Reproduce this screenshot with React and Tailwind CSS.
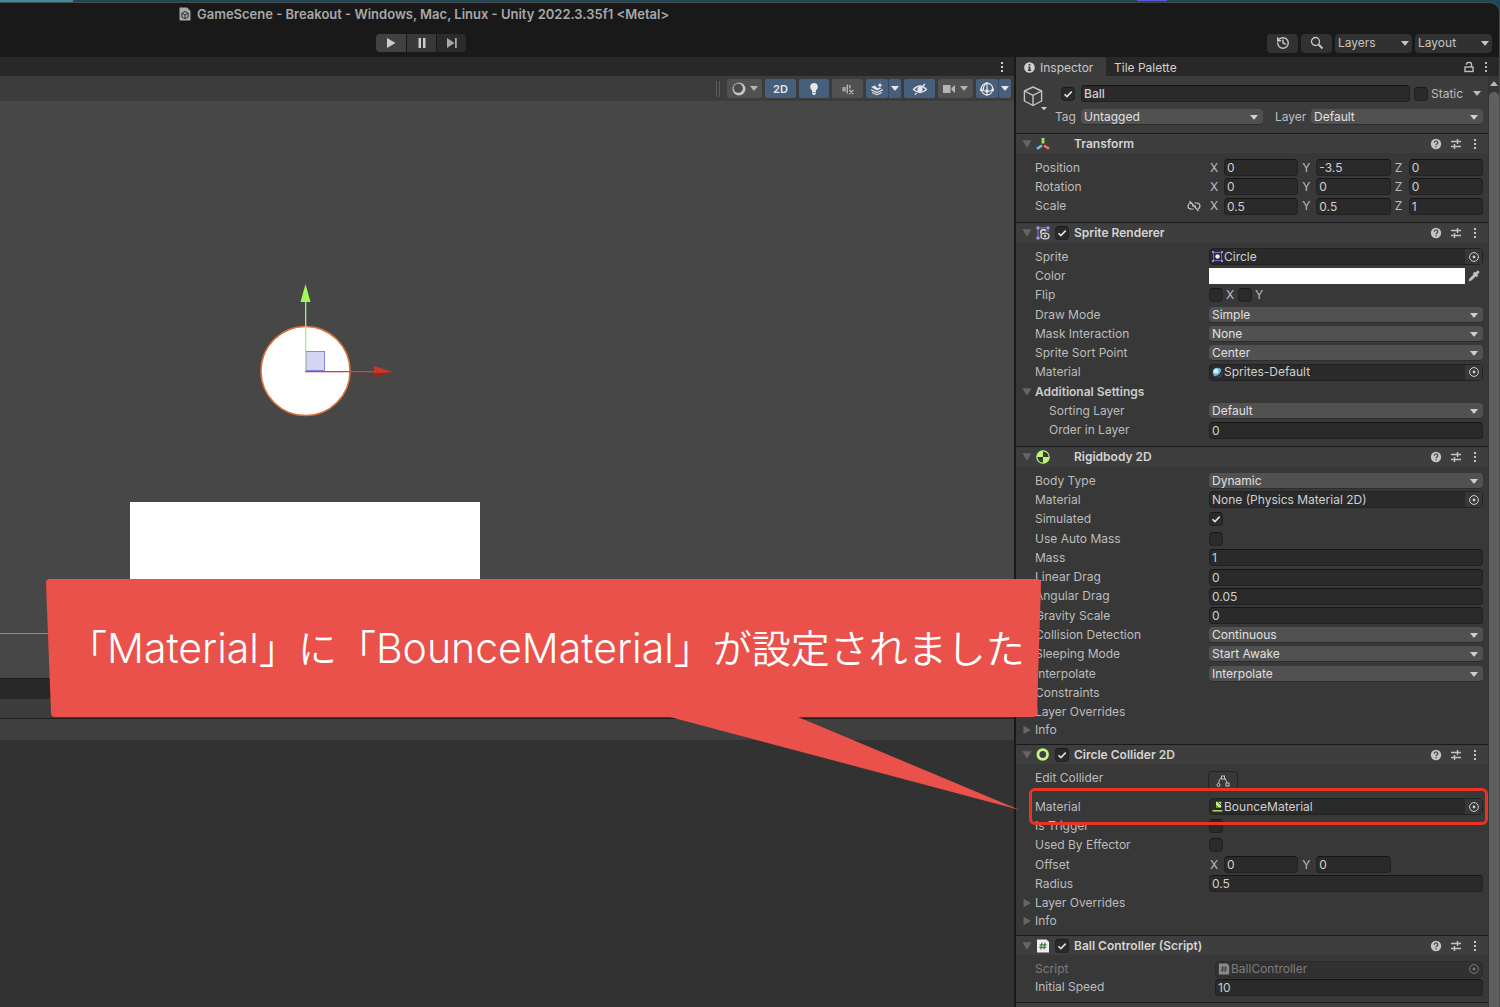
import { useId } from 'react'
import { History, Search, Pipette } from 'lucide-react'

/* ---------- small icons ---------- */

function Caret({ className = '' }) {
  return (
    <svg viewBox="0 0 8 5" className={`w-2 h-[5px] pointer-events-none ${className}`} fill="currentColor">
      <path d="M0 0h8L4.6 4.2q-.6.7-1.2 0z" />
    </svg>
  )
}

function Foldout({ open }) {
  return (
    <svg viewBox="0 0 10 10" className="w-2.5 h-2.5 text-[#666]" fill="currentColor">
      {open ? <path d="M.5 1.300h9L5 8.800z" /> : <path d="M1.500 .8l7.500 4.200-7.500 4.200z" />}
    </svg>
  )
}

function Kebab({ className = '' }) {
  return (
    <svg viewBox="0 0 4 12" className={`w-1 h-3 ${className}`} fill="currentColor">
      <rect x="1" y="1" width="2" height="2" />
      <rect x="1" y="5" width="2" height="2" />
      <rect x="1" y="9" width="2" height="2" />
    </svg>
  )
}

function HelpIcon() {
  return (
    <svg viewBox="0 0 12 12" className="w-3 h-3">
      <circle cx="6" cy="6" r="5.200" fill="#c4c4c4" />
      <path d="M4.300 4.700a1.700 1.700 0 1 1 2.400 1.500q-.7.4-.7 1" fill="none" stroke="#3e3e3e" strokeWidth="1.200" />
      <rect x="5.400" y="8.200" width="1.200" height="1.200" fill="#3e3e3e" />
    </svg>
  )
}

function PresetIcon() {
  return (
    <svg viewBox="0 0 12 12" className="w-3 h-3" fill="none" stroke="#c4c4c4" strokeWidth="1.400">
      <path d="M1 3.500h6.500M7.500 1v5M7.500 3.500h3.500M1 8.500h3.500M4.500 6v5M4.500 8.500H11" />
    </svg>
  )
}

function LockIcon() {
  return (
    <svg viewBox="0 0 10 12" className="w-2.5 h-3" fill="none" stroke="currentColor" strokeWidth="1.400">
      <rect x="1" y="6" width="8" height="4.500" />
      <path d="M2.500 3.800V3q0-1.500 1.500-1.500h2Q7.500 1.500 7.500 3v3" />
    </svg>
  )
}

function TargetIcon() {
  return (
    <svg viewBox="0 0 12 12" className="w-3 h-3" fill="none" stroke="currentColor">
      <circle cx="6" cy="6" r="4.400" />
      <circle cx="6" cy="6" r="1.400" fill="currentColor" stroke="none" />
    </svg>
  )
}

function CubeIcon() {
  return (
    <svg viewBox="0 0 24 26" className="w-6 h-[26px]" fill="none" stroke="#c4c4c4" strokeWidth="1.400" strokeLinejoin="round">
      <path d="M10 2l8.600 4v10L10 20.500l-8.600-4.500V6z" />
      <path d="M1.400 6L10 10.400l8.600-4.400M10 10.400v10" />
      <path d="M18 22h6l-3 3.200z" fill="#d0d0d0" stroke="none" />
    </svg>
  )
}

function TransformIcon() {
  return (
    <svg viewBox="0 0 14 14" className="w-3.5 h-3.5" fill="none" strokeWidth="2.400">
      <path d="M7 1v5.500" stroke="#a6e05a" strokeWidth="2.800" />
      <path d="M6 8.500L1 11.800" stroke="#7cc0f0" />
      <path d="M8 8.500l5 3.300" stroke="#f0784a" />
    </svg>
  )
}

function SpriteRendererIcon() {
  return (
    <svg viewBox="0 0 14 14" className="w-3.5 h-3.5" fill="none">
      <path d="M2 1.800h10M2 2v10M12 2v4M2 12h3" stroke="#8a78d8" />
      <g fill="#a695f2">
        <rect x=".5" y=".5" width="2.800" height="2.800" />
        <rect x="10.700" y=".5" width="2.800" height="2.800" />
        <rect x=".5" y="10.700" width="2.800" height="2.800" />
      </g>
      <path d="M4.800 7.500V6a2.600 2.600 0 0 1 5-.8" stroke="#d8d8d8" strokeWidth="1.800" />
      <ellipse cx="9" cy="10" rx="4" ry="2.900" fill="#3e3e3e" stroke="#d8d8d8" strokeWidth="1.300" />
      <circle cx="9" cy="10" r="1.200" fill="#d8d8d8" />
    </svg>
  )
}

function RigidbodyIcon() {
  return (
    <svg viewBox="0 0 14 14" className="w-3.5 h-3.5">
      <circle cx="7" cy="7" r="6.200" fill="#383838" stroke="#c0f27c" strokeWidth="1.200" />
      <path d="M7 7V.8A6.200 6.200 0 0 0 .8 7zM7 7v6.200A6.200 6.200 0 0 0 13.200 7z" fill="#c0f27c" />
    </svg>
  )
}

function ColliderIcon() {
  return (
    <svg viewBox="0 0 14 14" className="w-3.5 h-3.5">
      <circle cx="6.700" cy="6.500" r="4.800" fill="none" stroke="#c6f284" strokeWidth="2.800" />
    </svg>
  )
}

function ScriptIcon({ className = 'w-3.5 h-3.5', paper = '#eeeeee', ink = '#3c7a3c' }) {
  return (
    <svg viewBox="0 0 14 14" className={className}>
      <path d="M1 .5h9.500L13 3v10.500H1z" fill={paper} />
      <path d="M5.800 3.500l-1 7M9 3.500l-1 7M3.600 5.800h7M3.300 8.400h7" stroke={ink} strokeWidth="1.200" />
    </svg>
  )
}

function SpriteIcon() {
  return (
    <svg viewBox="0 0 11 11" className="w-[11px] h-[11px]">
      <rect x="1.500" y="1.500" width="8" height="8" fill="none" stroke="#7767c4" />
      <path d="M0 0h2v2H0zM9 0h2v2H9zM0 9h2v2H0zM9 9h2v2H9z" fill="#9b8aec" />
      <circle cx="5.500" cy="5.500" r="2.200" fill="#eeeeee" />
    </svg>
  )
}

function MaterialIcon() {
  return (
    <svg viewBox="0 0 11 11" className="w-[11px] h-[11px]">
      <circle cx="5.500" cy="5.500" r="4.800" fill="#6fb0d0" />
      <circle cx="4" cy="4" r="2.600" fill="#c4ecfa" />
      <path d="M9.200 2.500a4.800 4.800 0 0 1-6.700 6.700Q9 8.500 9.200 2.500z" fill="#26323a" />
    </svg>
  )
}

function BounceIcon() {
  return (
    <svg viewBox="0 0 11 11" className="w-[11px] h-[11px]">
      <path d="M.5 9.800h10" stroke="#b4ec5c" strokeWidth="1.400" />
      <rect x="4" y=".8" width="5.200" height="5.800" fill="#c0f27c" />
      <path d="M3.500 4.200l3 2.500M6 1.200l3.400 3" stroke="#2a2a2a" strokeWidth=".9" fill="none" />
    </svg>
  )
}

function UnlinkIcon() {
  return (
    <svg viewBox="0 0 14 12" className="w-3.5 h-3" fill="none" stroke="#c4c4c4" strokeWidth="1.200">
      <path d="M5.500 3H4a3 3 0 0 0 0 6h2.500M7.500 3H10a3 3 0 0 1 1 5.800M5 6h4M2.500 1l9 10" />
    </svg>
  )
}

/* ---------- controls ---------- */

function Check({ label, id, checked }) {
  return (
    <span className="relative block shrink-0 w-3.5 h-3.5">
      <input
        id={id}
        type="checkbox"
        aria-label={label}
        defaultChecked={checked}
        className="peer block w-full h-full appearance-none rounded-sm bg-[#2a2a2a] border border-[#222] border-t-[#181818]"
      />
      <svg viewBox="0 0 14 14" className="absolute inset-0 hidden w-full h-full pointer-events-none peer-checked:block" fill="none" stroke="#e0e0e0" strokeWidth="1.600">
        <path d="M3.500 7.200l2.400 2.400 4.800-5" />
      </svg>
    </span>
  )
}

function TextField({ id, label, value, className = '' }) {
  return (
    <input
      id={id}
      type="text"
      aria-label={label}
      defaultValue={value}
      className={`h-[17px] w-full min-w-0 rounded-sm bg-[#2a2a2a] border border-[#212121] border-t-[#151515] px-0.5 text-[#d0d0d0] outline-none ${className}`}
    />
  )
}

function Dropdown({ id, value, className = 'w-full' }) {
  return (
    <div className={`relative h-4 ${className}`}>
      <select id={id} className="block w-full h-4 appearance-none rounded-sm bg-[#515151] border-b border-[#2c2c2c] px-[3px] leading-[15px] text-[#e0e0e0] outline-none">
        <option>{value}</option>
      </select>
      <Caret className="absolute right-[5px] top-1.5 text-[#cfcfcf]" />
    </div>
  )
}

function ObjectField({ icon, value, disabled }) {
  return (
    <div className={`flex items-center w-full h-[17px] rounded-sm border pl-0.5 ${disabled ? 'bg-[#313131] border-[#2c2c2c] text-[#7c7c7c]' : 'bg-[#2a2a2a] border-[#212121] text-[#d0d0d0]'}`}>
      {icon && <span className="mr-px">{icon}</span>}
      <span className="flex-1 whitespace-nowrap">{value}</span>
      <button aria-label={`Select ${value}`} disabled={disabled} className={`flex items-center justify-center w-[17px] h-full ${disabled ? '' : 'bg-[#373737]'}`}>
        <TargetIcon />
      </button>
    </div>
  )
}

function Vector({ label, axes }) {
  return (
    <div className="grid w-full grid-cols-3 gap-[3px]">
      {axes.map(([axis, value]) => (
        <label key={axis} className="flex items-center">
          <span className="w-[15px] shrink-0 pl-px">{axis}</span>
          <TextField label={`${label} ${axis}`} value={value} />
        </label>
      ))}
    </div>
  )
}

function Row({ row, wide }) {
  const id = useId()
  const { label, type, value, icon, fold, bold, indent, highlight, linked, disabled } = row

  return (
    <div className={`relative flex items-center pr-[5px] ${disabled ? 'text-[#7c7c7c]' : ''}`}>
      <div className="flex w-[19px] shrink-0 pl-1.5">{fold && <Foldout open={fold === 'open'} />}</div>
      <label
        htmlFor={id}
        className={`flex shrink-0 items-center justify-between pr-2 whitespace-nowrap ${wide ? 'w-[180px]' : 'w-[174px]'} ${bold ? 'font-semibold text-[#cccccc]' : ''} ${indent ? 'pl-3.5' : ''}`}
      >
        {label}
        {linked && <UnlinkIcon />}
      </label>
      {type === 'text' && <TextField id={id} value={value} />}
      {type === 'select' && <Dropdown id={id} value={value} />}
      {type === 'object' && <ObjectField icon={icon} value={value} disabled={disabled} />}
      {type === 'check' && <Check id={id} checked={value} />}
      {type === 'vector' && <Vector label={label} axes={value} />}
      {type === 'color' && (
        <div className="flex items-center w-full">
          <input
            id={id}
            type="color"
            defaultValue="#ffffff"
            className="block flex-1 h-4 p-0 appearance-none bg-white [&::-webkit-color-swatch-wrapper]:p-0 [&::-webkit-color-swatch]:border-0"
          />
          <button aria-label="Pick color" className="flex items-center justify-center w-[18px] h-4">
            <Pipette className="w-3 h-3 text-[#c4c4c4]" fill="currentColor" />
          </button>
        </div>
      )}
      {type === 'flip' && (
        <div className="flex items-center gap-[3px]">
          <Check label="Flip X" />
          <span className="w-[9px]">X</span>
          <Check label="Flip Y" />
          <span>Y</span>
        </div>
      )}
      {highlight && (
        <div className="absolute z-10 left-[13px] right-0 -inset-y-[9px] rounded-md border-3 border-[#ea3323] pointer-events-none" />
      )}
    </div>
  )
}

function Component({ title, icon, enabled, children }) {
  return (
    <section className="border-t border-[#1a1a1a] pb-1.5">
      <header className="flex items-center h-[19px] bg-[#3e3e3e] pl-1.5 pr-[11px]">
        <Foldout open />
        <span className="ml-1 w-[19px]">{icon}</span>
        <span className="w-[19px]">{enabled && <Check label={`${title} enabled`} checked />}</span>
        <h2 className="flex-1 font-semibold text-[#d4d4d4]">{title}</h2>
        <div className="flex items-center gap-2 text-[#c4c4c4]">
          <button aria-label={`${title} help`}><HelpIcon /></button>
          <button aria-label={`${title} presets`}><PresetIcon /></button>
          <button aria-label={`${title} menu`} className="ml-[3px]"><Kebab /></button>
        </div>
      </header>
      <div className="pt-[5px]">{children}</div>
    </section>
  )
}

function Rows({ rows, className, wide }) {
  return (
    <div className={`grid auto-rows-fr ${className}`}>
      {rows.map(row => <Row key={row.label} row={row} wide={wide} />)}
    </div>
  )
}

/* ---------- inspector data ---------- */

const TRANSFORM = [
  { label: 'Position', type: 'vector', value: [['X', '0'], ['Y', '-3.5'], ['Z', '0']] },
  { label: 'Rotation', type: 'vector', value: [['X', '0'], ['Y', '0'], ['Z', '0']] },
  { label: 'Scale', type: 'vector', linked: true, value: [['X', '0.5'], ['Y', '0.5'], ['Z', '1']] },
]

const SPRITE_RENDERER = [
  { label: 'Sprite', type: 'object', value: 'Circle', icon: <SpriteIcon /> },
  { label: 'Color', type: 'color' },
  { label: 'Flip', type: 'flip' },
  { label: 'Draw Mode', type: 'select', value: 'Simple' },
  { label: 'Mask Interaction', type: 'select', value: 'None' },
  { label: 'Sprite Sort Point', type: 'select', value: 'Center' },
  { label: 'Material', type: 'object', value: 'Sprites-Default', icon: <MaterialIcon /> },
  { label: 'Additional Settings', fold: 'open', bold: true },
  { label: 'Sorting Layer', type: 'select', value: 'Default', indent: true },
  { label: 'Order in Layer', type: 'text', value: '0', indent: true },
]

const RIGIDBODY = [
  { label: 'Body Type', type: 'select', value: 'Dynamic' },
  { label: 'Material', type: 'object', value: 'None (Physics Material 2D)' },
  { label: 'Simulated', type: 'check', value: true },
  { label: 'Use Auto Mass', type: 'check', value: false },
  { label: 'Mass', type: 'text', value: '1' },
  { label: 'Linear Drag', type: 'text', value: '0' },
  { label: 'Angular Drag', type: 'text', value: '0.05' },
  { label: 'Gravity Scale', type: 'text', value: '0' },
  { label: 'Collision Detection', type: 'select', value: 'Continuous' },
  { label: 'Sleeping Mode', type: 'select', value: 'Start Awake' },
  { label: 'Interpolate', type: 'select', value: 'Interpolate' },
  { label: 'Constraints', fold: 'closed' },
  { label: 'Layer Overrides', fold: 'closed' },
]

const CIRCLE_COLLIDER = [
  { label: 'Material', type: 'object', value: 'BounceMaterial', icon: <BounceIcon />, highlight: true },
  { label: 'Is Trigger', type: 'check', value: false },
  { label: 'Used By Effector', type: 'check', value: false },
  { label: 'Offset', type: 'vector', value: [['X', '0'], ['Y', '0']] },
  { label: 'Radius', type: 'text', value: '0.5' },
  { label: 'Layer Overrides', fold: 'closed' },
]

const BALL_CONTROLLER = [
  { label: 'Script', type: 'object', value: 'BallController', disabled: true, icon: <ScriptIcon className="w-3 h-3" paper="#8a8a8a" ink="#3c4a3c" /> },
  { label: 'Initial Speed', type: 'text', value: '10' },
]

const INFO = [{ label: 'Info', fold: 'closed' }]

/* ---------- layout ---------- */

function TopBar() {
  return (
    <header className="h-[54px] shrink-0">
      <div className="flex items-center h-[22px] pl-[179px] gap-1.5">
        <svg viewBox="0 0 12 14" className="w-3 h-3.5">
          <path d="M.5.5H8L11.500 4v9.500H.5z" fill="#a8a8a8" />
          <path d="M6 4.500l3.200 1.800v3.600L6 11.700 2.800 9.900V6.300zM6 8v3.500M6 8L3 6.400M6 8l3-1.600" fill="none" stroke="#303030" />
        </svg>
        <h1 className="text-[13px] font-semibold text-[#a8a8a8] whitespace-nowrap">
          GameScene - Breakout - Windows, Mac, Linux - Unity 2022.3.35f1 &lt;Metal&gt;
        </h1>
      </div>
      <div className="flex items-center justify-between h-8 pb-0.5 pt-1.5 pl-[376px] pr-[7px]">
        <div className="flex gap-px text-[#cccccc]">
          <button aria-label="Play" className="flex items-center justify-center w-[30px] h-[18px] bg-[#414141] rounded-l-sm">
            <svg viewBox="0 0 10 10" className="w-2.5 h-2.5" fill="currentColor"><path d="M1 0l8.500 5L1 10z" /></svg>
          </button>
          <button aria-label="Pause" className="flex items-center justify-center w-[29px] h-[18px] bg-[#383838]">
            <svg viewBox="0 0 10 10" className="w-2.5 h-2.5" fill="currentColor"><path d="M1.500 0h2.500v10H1.500zM6 0h2.500v10H6z" /></svg>
          </button>
          <button aria-label="Step" className="flex items-center justify-center w-[29px] h-[18px] bg-[#2b2b2b] rounded-r-sm text-[#a8a8a8]">
            <svg viewBox="0 0 12 10" className="w-3 h-2.5" fill="currentColor"><path d="M1 0l7.500 5L1 10zM9 0h1.800v10H9z" /></svg>
          </button>
        </div>
        <div className="flex items-center gap-[3px] text-xs text-[#c4c4c4]">
          <button aria-label="Undo history" className="flex items-center justify-center w-[31px] h-[19px] bg-[#313131] rounded-sm">
            <History className="w-3.5 h-3.5" strokeWidth={2.5} />
          </button>
          <button aria-label="Search" className="flex items-center justify-center w-[31px] h-[19px] bg-[#313131] rounded-sm">
            <svg viewBox="0 0 14 14" className="w-3.5 h-3.5" fill="none" stroke="currentColor">
              <circle cx="5.500" cy="5.500" r="4" strokeWidth="1.300" />
              <path d="M8.500 8.500l4 4" strokeWidth="2" />
            </svg>
          </button>
          {['Layers', 'Layout'].map(name => (
            <div key={name} className="relative">
              <select aria-label={name} className="block w-[77px] h-[19px] appearance-none rounded-sm bg-[#313131] pl-[3px] outline-none">
                <option>{name}</option>
              </select>
              <Caret className="absolute right-[3px] top-[7px]" />
            </div>
          ))}
        </div>
      </div>
    </header>
  )
}

function ToolButton({ label, on, className = 'w-[31px]', children }) {
  return (
    <button aria-label={label} className={`flex items-center justify-center h-[19px] rounded-xs ${on ? 'bg-[#46607c] text-[#e6e6e6]' : 'bg-[#515151] text-[#b4b4b4]'} ${className}`}>
      {children}
    </button>
  )
}

function SceneToolbar() {
  return (
    <div className="flex items-center justify-end gap-[3px] h-[25px] pr-[3px] bg-[#3c3c3c]">
      <div className="w-1 h-4 mr-1 border-x border-[#5a5a5a]" />
      <ToolButton label="Shading mode" className="w-[35px] gap-1">
        <svg viewBox="0 0 14 14" className="w-3.5 h-3.5">
          <circle cx="7" cy="7" r="6.500" fill="#c4c4c4" />
          <circle cx="6.200" cy="6.200" r="4.600" fill="#4a4a4a" />
        </svg>
        <Caret />
      </ToolButton>
      <ToolButton label="2D view" on><span className="text-[11px] font-semibold">2D</span></ToolButton>
      <ToolButton label="Lighting" on className="w-[30px]">
        <svg viewBox="0 0 12 12" className="w-3 h-3" fill="currentColor">
          <path d="M6 0a3.900 3.900 0 0 1 2 7.200V9H4V7.200A3.900 3.900 0 0 1 6 0zM4.200 9.600h3.600v1.200l-1 1.200H5.200l-1-1.200z" />
        </svg>
      </ToolButton>
      <ToolButton label="Audio">
        <svg viewBox="0 0 12 12" className="w-3 h-3" fill="none" stroke="currentColor" strokeWidth="1.400">
          <path d="M1.200 4v4.500M3 4v4.500M5.300 1.500v9M7.800 2v3.500M7.300 7l4 4M11.300 7l-4 4" />
        </svg>
      </ToolButton>
      <div className="flex">
        <ToolButton label="Effects" on className="w-[22px]">
          <svg viewBox="0 0 14 14" className="w-3.5 h-3.5" fill="currentColor">
            <path d="M1 5l4-1.500L7 6l3-.5 1.500.8L7 8.500z" />
            <path d="M1 7.800l6 2.700 6-2.700M2 10.500l5 2.200 5-2.200" fill="none" stroke="currentColor" strokeWidth="1.200" />
            <path d="M10 .5l.8 1.900 1.900.8-1.900.8L10 5.900 9.200 4l-1.900-.8 1.900-.8z" />
          </svg>
        </ToolButton>
        <ToolButton label="Effects menu" on className="w-[13px] border-l border-[#344a60]"><Caret /></ToolButton>
      </div>
      <ToolButton label="Scene visibility" on>
        <svg viewBox="0 0 16 14" className="w-4 h-3.5" fill="none" stroke="currentColor" strokeWidth="1.300">
          <path d="M1.500 7.500Q8 .5 14.500 7.500 8 13.500 1.500 7.500zM13 2L3 12.500" />
          <circle cx="8" cy="7.300" r="2" fill="currentColor" />
        </svg>
      </ToolButton>
      <ToolButton label="Camera" className="w-[35px] gap-1">
        <svg viewBox="0 0 13 10" className="w-[13px] h-2.5" fill="currentColor"><path d="M0 1h7.500v8H0zM8.500 4L12 1v8L8.500 6z" /></svg>
        <Caret />
      </ToolButton>
      <div className="flex">
        <ToolButton label="Gizmos" on className="w-[22px]">
          <svg viewBox="0 0 14 14" className="w-3.5 h-3.5" fill="none" stroke="currentColor" strokeWidth="1.200">
            <circle cx="7" cy="7" r="5.800" />
            <path d="M7 0v14M1 8q6 2.500 12 0M7 1Q3 3 3.500 8" />
            <path d="M5.500 7.500h3v3h-3zM0 6.500h2.500v2.500H0zM11.500 6.500H14v2.500h-2.500z" fill="currentColor" stroke="none" />
          </svg>
        </ToolButton>
        <ToolButton label="Gizmos menu" on className="w-[13px] border-l border-[#344a60]"><Caret /></ToolButton>
      </div>
    </div>
  )
}

function SceneView() {
  return (
    <div className="relative flex-1 overflow-hidden bg-[#474747]">
      <div className="absolute left-[130px] top-[401px] w-[350px] h-24 bg-white" />
      <div className="absolute inset-x-0 top-[532px] h-px bg-[#8c8c8c]" />
      {/* selected ball with its move gizmo */}
      <svg viewBox="0 0 140 140" className="absolute left-[255px] top-[180px] w-[140px] h-[140px]">
        <circle cx="50.500" cy="90" r="44.500" fill="#fff" stroke="#d9703a" strokeWidth="1.500" />
        <rect x="51" y="70.500" width="18.500" height="19" fill="#d4d4f4" stroke="#6a70d8" strokeWidth=".8" />
        <rect x="50" y="20" width="1.300" height="70" fill="#a8f070" />
        <path d="M45.500 21L50.500 3l5 18z" fill="#a0f85c" />
        <rect x="50" y="90" width="70" height="1.300" fill="#cc4438" />
        <path d="M119 85v11.500L137.500 91z" fill="#c43a2a" />
        <path d="M119 92.500v4L137.500 91z" fill="#8a2a20" />
      </svg>
    </div>
  )
}

function Inspector() {
  return (
    <aside className="flex w-[483px] shrink-0 flex-col">
      <div className="flex items-center h-[19px] bg-[#282828] shrink-0">
        <button className="flex items-center gap-[5px] w-[90px] h-full pl-2 pt-0.5 bg-[#3c3c3c] text-[#c8c8c8]">
          <svg viewBox="0 0 12 12" className="w-[11px] h-[11px] shrink-0">
            <circle cx="6" cy="6" r="5.800" fill="#d0d0d0" />
            <path d="M5 2.200h2v1.600H5zM4.500 5H7v3.500h.8v1.200H4.300V8.500H5V6h-.5z" fill="#3c3c3c" />
          </svg>
          Inspector
        </button>
        <button className="flex-1 h-full pl-2 pt-0.5 text-left text-[#d0d0d0]">Tile Palette</button>
        <button aria-label="Lock" className="mr-2.5"><LockIcon /></button>
        <button aria-label="Inspector menu" className="mr-[11px]"><Kebab /></button>
      </div>
      <div className="flex flex-1 min-h-0">
        <div className="flex-1 min-w-0 overflow-hidden bg-[#383838]">
          <div className="flex h-[57px] bg-[#3c3c3c] pl-[7px] pr-[5px] pt-[9px]">
            <div className="w-[31px] shrink-0"><CubeIcon /></div>
            <div className="flex-1 min-w-0">
              <div className="flex items-center h-[17px] pl-[7px]">
                <Check label="Ball active" checked />
                <TextField label="Name" value="Ball" className="flex-1 ml-[6px] mr-1 font-medium" />
                <Check id="static" />
                <label htmlFor="static" className="pl-[3px] w-[45px]">Static</label>
                <Caret className="mr-0.5" />
              </div>
              <div className="flex items-center h-4 mt-[7px]">
                <label htmlFor="tag" className="w-[27px] pl-px">Tag</label>
                <Dropdown id="tag" value="Untagged" className="w-[182px]" />
                <label htmlFor="layer" className="w-[48px] pl-[12px]">Layer</label>
                <Dropdown id="layer" value="Default" className="flex-1" />
              </div>
            </div>
          </div>

          <Component title="Transform" icon={<TransformIcon />}>
            <Rows rows={TRANSFORM} className="h-[58px]" />
          </Component>
          <Component title="Sprite Renderer" icon={<SpriteRendererIcon />} enabled>
            <Rows rows={SPRITE_RENDERER} className="h-[193px]" />
          </Component>
          <Component title="Rigidbody 2D" icon={<RigidbodyIcon />}>
            <Rows rows={RIGIDBODY} className="h-[251px]" />
            <Rows rows={INFO} className="h-4" />
          </Component>
          <Component title="Circle Collider 2D" icon={<ColliderIcon />} enabled>
            <div className="flex items-start h-7 pl-[19px]">
              <span className="w-[173px] pt-px">Edit Collider</span>
              <button aria-label="Edit Collider" className="flex items-center justify-center w-[30px] h-5 mt-0.5 rounded-sm border border-[#242424]">
                <svg viewBox="0 0 14 12" className="w-3.5 h-3" fill="none" stroke="#c4c4c4">
                  <path d="M2.500 8.500Q3 4 5.500 2.500M8.500 2.500l2.500 5" />
                  <rect x="5.500" y="1" width="3" height="3" />
                  <rect x="10" y="8" width="3" height="3" />
                  <circle cx="2.500" cy="10" r="1.500" />
                </svg>
              </button>
            </div>
            <Rows rows={CIRCLE_COLLIDER} className="h-[116px]" />
            <Rows rows={INFO} className="h-4" />
          </Component>
          <Component title="Ball Controller (Script)" icon={<ScriptIcon />} enabled>
            <Rows rows={BALL_CONTROLLER} className="h-9" wide />
          </Component>
          <div className="h-5 border-t border-[#1a1a1a] bg-[#3e3e3e]" />
        </div>
        <div className="flex w-[11px] shrink-0 flex-col items-center bg-[#353535]">
          <Caret className="my-[5px] rotate-180 text-[#b8b8b8]" />
          <div className="flex-1 w-[10px] mt-px rounded-t-md bg-[#5f5f5f]" />
        </div>
      </div>
    </aside>
  )
}

function Callout() {
  return (
    <div className="absolute z-20 left-[46px] top-[579px] w-[995px] h-[138px] pointer-events-none">
      <svg viewBox="0 0 995 232" className="absolute left-0 top-0 w-[995px] h-[232px]" fill="#e9514a">
        <path d="M4 0h987q4 0 4 4l-4 130q0 4-4 4H752l222 93-350-93H9q-4 0-4-4L0 4q0-4 4-4z" />
      </svg>
      <p className="relative flex h-full items-center pl-[22px] font-['Inter','Noto_Sans_CJK_JP',sans-serif] text-[39px] font-[350] text-white whitespace-nowrap">
        <span>
          「<span className="text-[41px] font-light">Material</span>」に「<span className="text-[41px] font-light">BounceMaterial</span>」が設定されました
        </span>
      </p>
    </div>
  )
}

export default function App() {
  return (
    <div className="relative h-screen overflow-hidden bg-[#1d4858] pt-0.5 font-['Inter','Noto_Sans_CJK_JP',sans-serif] text-xs leading-4 text-[#bcbcbc]">
      <div className="absolute left-0 top-0 w-[73px] h-0.5 bg-[#3f8ea0]" />
      <div className="absolute right-[333px] top-0 w-[30px] h-px bg-[#5a5ae0]" />
      <div className="flex h-full flex-col overflow-hidden rounded-tr-[10px] border-t border-r border-[#4a4a4a] bg-[#191919]">
        <TopBar />
        <div className="flex flex-1 min-h-0 gap-0.5">
          <main className="flex flex-1 min-w-0 flex-col">
            <div className="flex items-center justify-end h-[19px] pr-2.5 bg-[#282828]">
              <button aria-label="Scene menu"><Kebab className="text-[#d0d0d0]" /></button>
            </div>
            <SceneToolbar />
            <SceneView />
            <div className="h-[329px] shrink-0 border-t border-[#1c1c1c] bg-[#323232]">
              <div className="h-5 bg-[#282828]" />
              <div className="h-5 border-b border-[#202020] bg-[#3c3c3c]" />
              <div className="h-[21px] bg-[#3f3f3f]" />
            </div>
          </main>
          <Inspector />
        </div>
      </div>
      <Callout />
    </div>
  )
}
